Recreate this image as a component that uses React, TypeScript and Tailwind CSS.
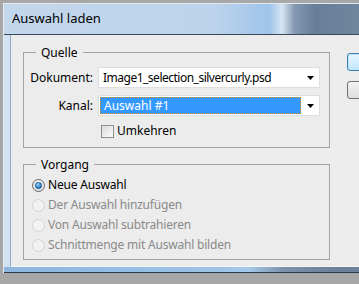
import { memo } from "react";

const font = { fontFamily: '"Noto Sans", "Liberation Sans", sans-serif' };

// Small black combo-box arrow
const Arrow = () => (
  <svg width="7" height="4" viewBox="0 0 7 4" className="shrink-0">
    <path d="M0 0h7L3.5 4z" fill="#000" />
  </svg>
);

const Radio = ({ checked, disabled }: { checked?: boolean; disabled?: boolean }) => (
  <svg width="13" height="13" viewBox="0 0 13 13" className="shrink-0">
    <defs>
      <radialGradient id="rb" cx="50%" cy="40%" r="60%">
        <stop offset="0%" stopColor="#ffffff" />
        <stop offset="100%" stopColor="#dcdcdc" />
      </radialGradient>
      <radialGradient id="dot" cx="40%" cy="35%" r="70%">
        <stop offset="0%" stopColor="#8fd0ff" />
        <stop offset="100%" stopColor="#0b5fa8" />
      </radialGradient>
    </defs>
    <circle
      cx="6.5"
      cy="6.5"
      r="6"
      fill={disabled ? "#f2f2f2" : "url(#rb)"}
      stroke={disabled ? "#d2d2d2" : "#6a6a6a"}
    />
    {checked && <circle cx="6.5" cy="6.5" r="3.2" fill="url(#dot)" stroke="#1a4f80" strokeWidth="0.6" />}
  </svg>
);

const options = [
  { label: "Neue Auswahl", checked: true },
  { label: "Der Auswahl hinzufügen" },
  { label: "Von Auswahl subtrahieren" },
  { label: "Schnittmenge mit Auswahl bilden" },
];

const App = () => {
  return (
    <div
      className="w-[359px] h-[284px] overflow-hidden bg-[#a7a7a7] pl-[3px] pt-[3px] pr-[7px] pb-[11px] flex"
      style={font}
    >
      <div className="flex-1 flex flex-col border-t border-l border-[#e4ebf2] bg-[#cfe0f1]">
        {/* title bar */}
        <div className="h-[30px] flex items-center pl-[8px] text-[13px] text-black bg-[linear-gradient(90deg,#c3d7ec_0%,#bcd3eb_50%,#a6c7ea_60%,#a0c4ea_63%,#d6e5f3_66%,#8399b1_69%,#687e97_74%,#7489a0_88%,#8597ad_100%)]">
          Auswahl laden
        </div>

        <div className="flex-1 flex border-t border-[#3a4756]">
          <div className="w-[6px] bg-[#d3e2f1]" />
          <div className="flex-1 flex overflow-hidden bg-[#ececec] border-l border-[#8fa9c4] border-b border-b-[#f6f6f6] pl-[12px] pt-[10px] text-[12px] text-black">
            <div className="w-[307px] shrink-0 flex flex-col">
              <fieldset className="border border-[#a3a3a3] pb-[8px]">
                <legend className="ml-[12px] px-[5px] leading-[15px]">Quelle</legend>
                <div className="mt-[7px] flex items-center">
                  <span className="w-[69px] text-right">Dokument:</span>
                  <div className="ml-[5px] w-[222px] h-[21px] flex items-center bg-white border border-[#dedede] pl-[4px] pr-[5px]">
                    <span className="flex-1 whitespace-nowrap tracking-[-0.5px]">Image1_selection_silvercurly.psd</span>
                    <Arrow />
                  </div>
                </div>
                <div className="mt-[7px] flex items-center">
                  <span className="w-[69px] text-right">Kanal:</span>
                  <div className="ml-[5px] w-[222px] h-[21px] flex items-center bg-white border border-[#dedede] pl-[1px] pr-[5px]">
                    <span className="w-[201px] h-[17px] flex items-center bg-[#3399ff] text-white pl-[3px] border border-dotted border-[#2a1a00] outline outline-1 outline-dotted outline-offset-[-1px] outline-[#e98a00]">
                      Auswahl #1
                    </span>
                    <span className="flex-1" />
                    <Arrow />
                  </div>
                </div>
                <div className="mt-[7px] h-[16px] flex items-center ml-[77px]">
                  <span className="w-[13px] h-[13px] border border-[#8e8f8f] bg-[linear-gradient(135deg,#dcdcdc,#fbfbfb)]" />
                  <span className="ml-[3px]">Umkehren</span>
                </div>
              </fieldset>

              <fieldset className="mt-[9px] border border-[#a3a3a3] pt-[3px] pb-[4px]">
                <legend className="ml-[12px] px-[5px] leading-[15px]">Vorgang</legend>
                {options.map((o) => (
                  <div key={o.label} className="h-[20px] flex items-center ml-[8px] tracking-[-0.2px]">
                    <Radio checked={o.checked} disabled={!o.checked} />
                    <span className={`ml-[3px] ${o.checked ? "text-black" : "text-[#8a8a8a]"}`}>
                      {o.label}
                    </span>
                  </div>
                ))}
              </fieldset>
            </div>

            <div className="ml-[17px] pt-[8px] flex flex-col gap-[10px] shrink-0">
              <div className="w-[75px] h-[18px] rounded-[3px] border border-[#3c7fb1] bg-[linear-gradient(#eaf6fd,#bee6fd)] shadow-[inset_0_0_0_1px_#c0e4f9]" />
              <div className="w-[75px] h-[18px] rounded-[3px] border border-[#707070] bg-[linear-gradient(#f2f2f2,#dddddd)]" />
            </div>
          </div>
          <div className="w-[3px] bg-[#d3e2f1]" />
        </div>

        {/* bottom frame band */}
        <div className="h-[6px] border-b border-[#2b3a4a] bg-[linear-gradient(90deg,#8db6de_0%,#9cc2e6_50%,#a6c9ea_58%,#7d93ab_66%,#6a7f98_80%,#7c8fa6_100%)]" />
      </div>
    </div>
  );
};

export default memo(App);
